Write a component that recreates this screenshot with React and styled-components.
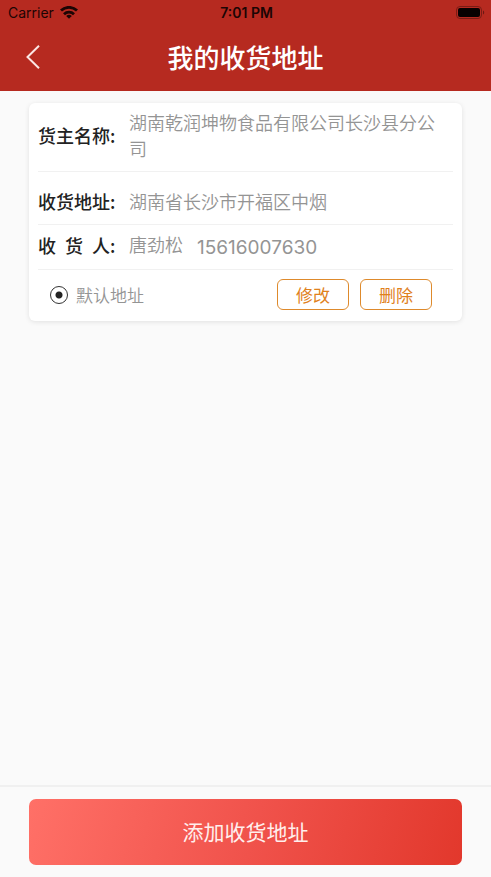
import React, { useState } from "react";
import styled, { createGlobalStyle } from "styled-components";

const GlobalStyle = createGlobalStyle`
  *, *::before, *::after { box-sizing: border-box; }
  body {
    margin: 0;
    background: #fafafa;
    font-family: "Noto Sans CJK SC", sans-serif;
  }
  button, input { font-family: inherit; }
`;

const Screen = styled.div`
  display: flex;
  flex-direction: column;
  min-height: 100vh;
`;

const Header = styled.header`
  background: #b62a20;
`;

const StatusBar = styled.div`
  display: grid;
  grid-template-columns: 1fr auto 1fr;
  align-items: center;
  height: 25px;
  padding: 0 6px 0 8px;
  color: #1c0504;
  font-family: Inter, sans-serif;
  font-size: 14px;
`;

const Carrier = styled.span`
  display: flex;
  align-items: center;
  gap: 6px;
`;

const Time = styled.time`
  font-weight: 600;
`;

const Battery = styled.svg`
  justify-self: end;
`;

const NavBar = styled.div`
  display: grid;
  grid-template-columns: 48px 1fr 48px;
  align-items: center;
  height: 66px;
  padding-bottom: 2px;
`;

const BackButton = styled.button`
  display: flex;
  justify-content: flex-end;
  padding: 8px;
  border: 0;
  background: none;
  color: #fbe6e4;
  cursor: pointer;
`;

const Title = styled.h1`
  margin: 0;
  color: #fff;
  font-size: 26px;
  font-weight: 500;
  line-height: 36px;
  text-align: center;
`;

const Content = styled.main`
  flex: 1;
  padding: 12px 29px;
`;

const Card = styled.article`
  padding: 0 9px;
  border-radius: 6px;
  background: #fff;
  box-shadow: 0 1px 5px rgba(0, 0, 0, 0.1);
`;

const Details = styled.dl`
  margin: 0;
`;

const Row = styled.div`
  display: flex;
  align-items: center;
  min-height: ${(p) => p.$height}px;
  padding: ${(p) => (p.$low ? "6px 10px 0 0" : "0 10px 4px 0")};
  border-bottom: 1px solid #f1f1f1;
`;

const Label = styled.dt`
  flex: 0 0 91px;
  color: #222;
  font-size: 18px;
  font-weight: 500;
  line-height: 26px;
  white-space: pre;
`;

const Value = styled.dd`
  display: flex;
  gap: 14px;
  margin: 0;
  color: #949494;
  font-size: 18px;
  font-weight: 350;
  line-height: 26px;
`;

const Phone = styled.span`
  padding-top: 6px;
  font-family: Inter, sans-serif;
  font-size: 19px;
  font-weight: 400;
  line-height: 22px;
`;

const CardFooter = styled.footer`
  display: flex;
  align-items: center;
  justify-content: space-between;
  height: 51px;
  padding: 0 21px 2px 12px;
`;

const RadioLabel = styled.label`
  display: flex;
  align-items: center;
  gap: 8px;
  color: #949494;
  font-size: 17px;
  font-weight: 350;
  line-height: 24px;
`;

const Radio = styled.input`
  appearance: none;
  width: 18px;
  height: 18px;
  margin: 0;
  border: 1px solid #333;
  border-radius: 50%;
  &:checked {
    background: radial-gradient(circle, #222 3px, transparent 4px);
  }
`;

const Actions = styled.div`
  display: flex;
  gap: 11px;
`;

const ActionButton = styled.button`
  width: 72px;
  height: 31px;
  padding: 0;
  border: 1px solid #de8a2c;
  border-radius: 6px;
  background: #fff;
  color: #e0811c;
  font-size: 17px;
  line-height: 28px;
  cursor: pointer;
`;

const BottomBar = styled.footer`
  padding: 12px 29px;
  border-top: 2px solid #f0f0f0;
`;

const AddButton = styled.button`
  display: block;
  width: 100%;
  height: 66px;
  padding: 0 0 2px;
  border: 0;
  border-radius: 7px;
  background: linear-gradient(105deg, #ff7067, #f0524b 52%, #e2382c);
  color: #ffeeec;
  font-size: 21px;
  cursor: pointer;
`;

function WifiIcon() {
  return (
    <svg width="18" height="13" viewBox="0 0 18 13" fill="none" stroke="currentColor" strokeWidth="2.8" aria-hidden="true">
      <path d="M1 4.6a11.4 11.4 0 0 1 16 0" />
      <path d="M4 8.2a7.2 7.2 0 0 1 10 0" />
      <path d="M9 12.8 6.2 10a4 4 0 0 1 5.6 0Z" fill="currentColor" stroke="none" />
    </svg>
  );
}

function BatteryIcon() {
  return (
    <Battery width="29" height="14" viewBox="0 0 29 14" aria-hidden="true">
      <rect x="0.5" y="0.5" width="25" height="12" rx="3.5" fill="none" stroke="#7a1c15" />
      <rect x="2" y="2" width="22" height="9" rx="2" fill="#080101" />
      <path d="M27 4.5v4c1.6-.6 1.6-3.4 0-4Z" fill="#6a1812" />
    </Battery>
  );
}

function BackIcon() {
  return (
    <svg width="14" height="24" viewBox="0 0 14 24" fill="none" stroke="currentColor" strokeWidth="2" aria-hidden="true">
      <path d="M13 0.8 1.5 12 13 23.2" />
    </svg>
  );
}

export default function App() {
  const [isDefault, setIsDefault] = useState(true);
  return (
    <Screen>
      <GlobalStyle />
      <Header>
        <StatusBar>
          <Carrier>
            Carrier
            <WifiIcon />
          </Carrier>
          <Time>7:01 PM</Time>
          <BatteryIcon />
        </StatusBar>
        <NavBar>
          <BackButton type="button" aria-label="返回">
            <BackIcon />
          </BackButton>
          <Title>我的收货地址</Title>
        </NavBar>
      </Header>
      <Content>
        <Card>
          <Details>
            <Row $height={69}>
              <Label>货主名称:</Label>
              <Value>湖南乾润坤物食品有限公司长沙县分公司</Value>
            </Row>
            <Row $height={53} $low>
              <Label>收货地址:</Label>
              <Value>湖南省长沙市开福区中烟</Value>
            </Row>
            <Row $height={45}>
              <Label>{"收\u2002货\u2002人:"}</Label>
              <Value>
                唐劲松<Phone>15616007630</Phone>
              </Value>
            </Row>
          </Details>
          <CardFooter>
            <RadioLabel>
              <Radio type="radio" name="default-address" checked={isDefault} onChange={() => setIsDefault(true)} />
              默认地址
            </RadioLabel>
            <Actions>
              <ActionButton type="button">修改</ActionButton>
              <ActionButton type="button">删除</ActionButton>
            </Actions>
          </CardFooter>
        </Card>
      </Content>
      <BottomBar>
        <AddButton type="button">添加收货地址</AddButton>
      </BottomBar>
    </Screen>
  );
}
